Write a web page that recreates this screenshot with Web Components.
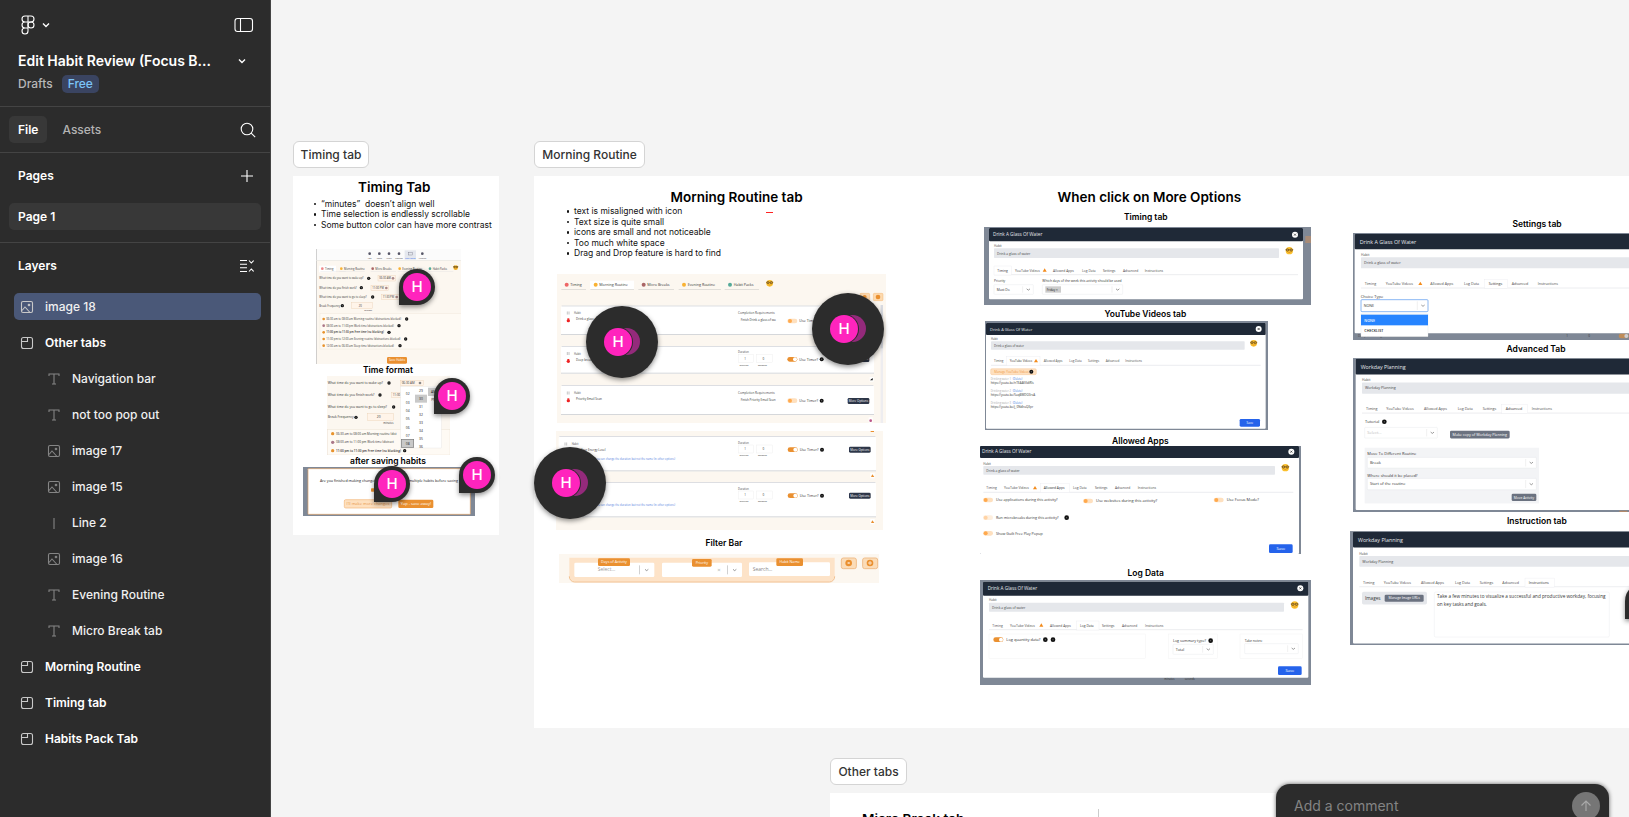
<!DOCTYPE html>
<html lang="en">
<head>
<meta charset="utf-8">
<title>Edit Habit Review</title>
<style>
  html, body { margin: 0; height: 100%; }
  body { font-family: Inter, "Liberation Sans", sans-serif; background: #f4f4f4; overflow: hidden; }
</style>
</head>
<body>
<design-app></design-app>

<script>
const define = (name, html, setup) => {
  const template = document.createElement('template');
  template.innerHTML = html;
  customElements.define(name, class extends HTMLElement {
    constructor() {
      super();
      this.attachShadow({ mode: 'open' }).append(template.content.cloneNode(true));
    }
    connectedCallback() { if (setup) setup(this, this.shadowRoot); }
  });
};

/* ---------- icons ---------- */
const ICONS = {
  figma: [14, 20, '<path d="M7 1H4a3 3 0 0 0 0 6h3zM7 1h3a3 3 0 0 1 0 6H7zM7 7H4a3 3 0 0 0 0 6h3zM7 13H4a3 3 0 1 0 3 3z"/><circle cx="10" cy="10" r="3"/>'],
  chevron: [8, 6, '<path d="M1 1.5l3 3 3-3" stroke-width="1.4"/>'],
  panel: [20, 16, '<rect x="1" y="1.5" width="17.5" height="13" rx="2.5"/><path d="M6.5 1.5v13"/>'],
  search: [16, 16, '<circle cx="7" cy="7" r="5.8"/><path d="M11.2 11.2l4 4"/>'],
  plus: [14, 14, '<path d="M7 1v12M1 7h12"/>'],
  collapse: [14, 14, '<path d="M0 1.5h7M0 5.2h7M0 8.8h7M0 12.5h7M9 1.5l2.3 2.5 2.3-2.5M9 12.5l2.3-2.5 2.3 2.5"/>'],
  image: [14, 14, '<rect x="1.5" y="1.5" width="11" height="11" rx="1.5"/><path d="M2 10.5l3-3.5 5 5.5"/><circle cx="9" cy="5" r=".8"/>'],
  frame: [14, 14, '<rect x="1.5" y="1.5" width="11" height="11" rx="2"/><path d="M7.5 1.5v4h-6"/>'],
  text: [14, 14, '<path d="M2 4V2h10v2M7 2v10M5 12h4"/>'],
  line: [14, 14, '<path d="M7 2v11"/>'],
  up: [14, 14, '<path d="M7 12V2M2.5 6.5L7 2l4.5 4.5"/>']
};
const drawIcon = name => {
  const [w, h, d] = ICONS[name];
  return `<svg width="${w}" height="${h}" viewBox="0 0 ${w} ${h}" aria-hidden="true">${d}</svg>`;
};
define('ui-icon', `<style>:host{display:inline-flex;flex:none} svg{display:block;fill:none;stroke:currentColor;stroke-width:1.1}</style><span></span>`,
  (el, root) => { root.querySelector('span').innerHTML = drawIcon(el.getAttribute('name')); });
const makeIcon = name => {
  const icon = document.createElement('ui-icon');
  icon.setAttribute('name', name);
  return icon;
};

/* ---------- left panel ---------- */
define('file-header', `<style>
  :host { display: block; padding: 15px 16px 13px 18px; border-bottom: 1px solid #444; }
  button { all: unset; display: flex; align-items: center; cursor: pointer; }
  .row { display: flex; align-items: center; justify-content: space-between; }
  .menu { gap: 7px; padding-left: 3px; }
  .name { margin-top: 16px; padding-right: 8px; }
  h1 { margin: 0; font-size: 14px; line-height: 20px; font-weight: 600; color: #fff; }
  .meta { display: flex; align-items: center; gap: 9px; margin-top: 4px; font-size: 12px; line-height: 18px; font-weight: 500; }
  a { color: #b8b8b8; text-decoration: none; }
  .plan { padding: 0 6px; border-radius: 5px; background: #3a4461; color: #7cc4f8; }
</style>
<div class="row"><button class="menu" aria-label="Main menu"><ui-icon name="figma"></ui-icon><ui-icon name="chevron"></ui-icon></button>
<button aria-label="Toggle panel"><ui-icon name="panel"></ui-icon></button></div>
<div class="row name"><h1>Edit Habit Review (Focus B...</h1><button aria-label="File options"><ui-icon name="chevron"></ui-icon></button></div>
<div class="meta"><a href="#drafts">Drafts</a><span class="plan">Free</span></div>`);

define('panel-tabs', `<style>
  :host { display: flex; align-items: center; padding: 9px 14px 9px 9px; border-bottom: 1px solid #444; }
  button { all: unset; padding: 0 9px; border-radius: 5px; font-size: 12px; line-height: 27px; font-weight: 500; color: #b3b3b3; cursor: pointer; }
  .on { background: #383838; color: #fff; font-weight: 600; margin-right: 6px; }
  .search { margin-left: auto; padding: 0; color: #fff; display: flex; }
</style>
<button class="on">File</button><button>Assets</button><button class="search" aria-label="Find"><ui-icon name="search"></ui-icon></button>`);

define('panel-heading', `<style>
  :host { display: flex; align-items: center; justify-content: space-between; padding: 0 16px 0 18px; color: #fff; }
  h2 { margin: 0; font-size: 12px; line-height: 45px; font-weight: 600; }
  button { all: unset; display: flex; cursor: pointer; }
</style><h2><slot></slot></h2><button></button>`,
  (el, root) => {
    const action = root.querySelector('button');
    action.setAttribute('aria-label', el.getAttribute('action'));
    action.append(makeIcon(el.getAttribute('icon')));
  });

define('layer-row', `<style>
  :host { display: block; color: #f0f0f0; }
  button { all: unset; box-sizing: border-box; display: flex; align-items: center; gap: 11px; width: 100%; padding-left: 6px;
    border-radius: 5px; font-size: 12px; line-height: 27px; font-weight: 500; cursor: pointer; }
  ui-icon { color: #c8c8c8; }
  :host([frame]) button { font-weight: 600; color: #fff; }
  :host([child]) button { padding-left: 33px; }
  :host([child]) ui-icon { color: #858585; }
  :host([selected]) button { background: #4a5878; }
</style><button><slot></slot></button>`,
  (el, root) => { root.querySelector('button').prepend(makeIcon(el.getAttribute('icon'))); });

define('layer-panel', `<style>
  :host { display: block; box-sizing: border-box; flex: none; width: 271px; background: #2c2c2c; color: #fff; border-right: 1px solid #444; }
  .pages { display: grid; border-bottom: 1px solid #444; padding-bottom: 12px; }
  .page { all: unset; margin: 5px 9px 0; padding: 0 9px; border-radius: 5px; background: #383838;
    font-size: 12px; line-height: 27px; font-weight: 600; cursor: pointer; }
  .layers { display: grid; gap: 9px; padding: 5px 9px 0 14px; }
</style>
<file-header></file-header>
<panel-tabs></panel-tabs>
<div class="pages"><panel-heading icon="plus" action="Add page">Pages</panel-heading><button class="page">Page 1</button></div>
<panel-heading icon="collapse" action="Collapse layers">Layers</panel-heading>
<div class="layers">
  <layer-row icon="image" selected>image 18</layer-row>
  <layer-row icon="frame" frame>Other tabs</layer-row>
  <layer-row icon="text" child>Navigation bar</layer-row>
  <layer-row icon="text" child>not too pop out</layer-row>
  <layer-row icon="image" child>image 17</layer-row>
  <layer-row icon="image" child>image 15</layer-row>
  <layer-row icon="line" child>Line 2</layer-row>
  <layer-row icon="image" child>image 16</layer-row>
  <layer-row icon="text" child>Evening Routine</layer-row>
  <layer-row icon="text" child>Micro Break tab</layer-row>
  <layer-row icon="frame" frame>Morning Routine</layer-row>
  <layer-row icon="frame" frame>Timing tab</layer-row>
  <layer-row icon="frame" frame>Habits Pack Tab</layer-row>
</div>`);

/* ---------- canvas objects: x, y, w, h attributes give their place on the board ---------- */
const place = el => {
  for (const [attr, prop] of [['x', 'left'], ['y', 'top'], ['w', 'width'], ['h', 'height']])
    if (el.hasAttribute(attr)) el.style[prop] = el.getAttribute(attr) + 'px';
};
define('board-section', `<style>:host{display:block;position:absolute;background:#fff}</style><slot></slot>`, place);
define('board-shape', `<style>:host{display:block;position:absolute;background:var(--fill)}</style>`, place);
define('board-note', `<style>
  :host { display: block; position: absolute; white-space: nowrap; color: #000; font-size: 17px; line-height: 20px; font-weight: 600; }
  :host([title]) { font-size: 27px; line-height: 32px; }
  :host([list]) { font-weight: 400; line-height: 21px; color: #111; }
</style><slot></slot>`, place);
define('section-label', `<style>
  :host { display: block; position: absolute; box-sizing: border-box; padding: 0 6px; border: 1px solid #d4d4d4; border-radius: 6px;
    background: #fff; color: #333; font-size: 12px; line-height: 25px; font-weight: 500; white-space: nowrap; text-align: center; }
</style><slot></slot>`, place);
define('comment-pin', `<style>
  :host { display: block; position: absolute; }
  button { all: unset; box-sizing: border-box; display: block; padding: 4px; width: 36px; height: 36px; border-radius: 18px 18px 18px 0;
    background: #2c2c2c; box-shadow: 0 2px 5px rgba(0,0,0,.45); cursor: pointer; }
  .avatar { display: grid; place-items: center; width: 28px; height: 28px; border-radius: 50%; background: #ff24bd; color: #fff;
    font-size: 15px; line-height: 28px; font-weight: 500; }
  .back { display: none; }
  :host([group]) button { position: relative; padding: 21px 18px; width: 72px; height: 72px; border-radius: 50%; }
  :host([group]) .avatar { position: relative; box-shadow: 0 0 0 1px #2c2c2c; }
  :host([group]) .back { display: block; position: absolute; left: 27px; top: 22px; width: 27px; height: 27px; border-radius: 50%; background: #942a7b; }
</style><button aria-label="Comment"><span class="back"></span><span class="avatar">H</span></button>`, place);
define('comment-box', `<style>
  :host { position: absolute; right: 20px; bottom: -16px; box-sizing: border-box; width: 333px; display: flex; align-items: center;
    padding: 8px 9px 13px 18px; border-radius: 14px; background: #2c2c2c; box-shadow: 0 0 4px rgba(0,0,0,.6); }
  input { all: unset; flex: 1; min-width: 0; font-size: 14px; line-height: 28px; color: #fff; }
  input::placeholder { color: #848484; opacity: 1; }
  button { all: unset; display: grid; place-items: center; width: 28px; height: 28px; border-radius: 50%; background: #767676; color: #aaa; cursor: pointer; }
</style><input aria-label="Comment" placeholder="Add a comment"><button aria-label="Send"><ui-icon name="up"></ui-icon></button>`);

/* ---------- drawing helpers for the pasted pictures (three units to a screen pixel) ---------- */
const NAVY = '#1f2937', SLATE = '#7f8896', CREAM = '#fcf7f0', ORANGE = '#ea9030', PEACH = '#fee0bf';
const box = (x1, y1, x2, y2, fill, more = '') => `<rect x="${x1}" y="${y1}" width="${x2 - x1}" height="${y2 - y1}" fill="${fill}" ${more}/>`;
const dot = (x, y, r, fill) => `<circle cx="${x}" cy="${y}" r="${r}" fill="${fill}"/>`;
const say = (x, y, size, text, fill = '#333', more = '') => `<text x="${x}" y="${y}" font-size="${size}" fill="${fill}" ${more}>${text}</text>`;
const mid = 'text-anchor="middle"';
const info = (x, y, r = 5) => dot(x, y, r, '#111') + `<path d="M${x} ${y - 2}v4" stroke="#fff"/>`;
const caret = (x, y) => `<path d="M${x - 5} ${y - 2}l5 4 5-4" fill="none" stroke="#666" stroke-width="2"/>`;
const choose = (x1, y1, x2, y2, text, size, fill) => box(x1, y1, x2, y2, '#fff', 'stroke="#dfe1e5" rx="2"') +
  say(x1 + 8, (y1 + y2) / 2 + 4, size, text, fill) + `<path d="M${x2 - 32} ${y1 + 5}V${y2 - 5}" stroke="#d0d0d0"/>` + caret(x2 - 15, (y1 + y2) / 2);
const toggle = (x, y, on, opacity = 1) => `<g opacity="${opacity}">` + box(x, y - 7, x + 30, y + 7, on ? ORANGE : PEACH, 'rx="7"') +
  dot(on ? x + 23 : x + 8, y, 6, on ? '#fff' : '#ffa94d') + '</g>';
const face = (x, y, r) => dot(x, y, r, '#fbc02d') + `<path d="M${x - r - 1} ${y - 3}h${2 * r + 2}" stroke="#6b4a14" stroke-width="1.5"/>` +
  [x - r / 2, x + r / 2].map(cx => `<circle cx="${cx}" cy="${y - 2}" r="${r / 3}" fill="#c99a3a" stroke="#6b4a14" stroke-width="2"/>`).join('') +
  `<path d="M${x - 3} ${y + r / 2}h6" stroke="#d9822b" stroke-width="2"/>`;
const warn = (x, y) => `<path d="M${x} ${y - 10}l6 10h-12z" fill="#f38b1c"/>`;
const button = (x1, y1, x2, y2, text, size, fill = '#2563eb', ink = '#fff', more = '') =>
  box(x1, y1, x2, y2, fill, 'rx="4" ' + more) + say((x1 + x2) / 2, (y1 + y2) / 2 + size / 3, size, text, ink, mid);
const TABS = ['Timing', 'YouTube Videos', 'Allowed Apps', 'Log Data', 'Settings', 'Advanced', 'Instructions'];
const tabs = (y, size, xs, sel, [s1, s2], [l1, l2], warnX) =>
  `<path d="M${l1} ${y + 9}H${l2}" stroke="#e2e4e8" stroke-width="2"/>` + box(s1, y - 17, s2, y + 10, '#fff', 'stroke="#e6e8ec"') +
  xs.map((x, i) => say(x, y, size, TABS[i], i === sel ? '#333' : '#4b4b4b')).join('') + (warnX ? warn(warnX, y) : '');
const closeDot = (x, y) => dot(x, y, 9, '#fff') + `<path d="M${x - 3} ${y - 3}l6 6m0-6l-6 6" stroke="#222" stroke-width="2"/>`;

/* a picture cut out of the view whose corner is (ox, oy) on screen; PANEL is the width of the left panel */
const PANEL = 271;
const picture = (ox, oy, x, y, w, h, name, body) => {
  const r = n => Math.round(n);
  return `<svg role="img" aria-label="${name}" viewBox="${x} ${y} ${w} ${h}" style="left:${r(2 * (ox - PANEL) + x * 2 / 3)}px;top:${r(2 * oy + y * 2 / 3)}px;width:${r(w * 2 / 3)}px;height:${r(h * 2 / 3)}px">${body}</svg>`;
};
const dialog = (outer, inner, headBottom, titleXY, title, titleSize, close) =>
  box(...outer, SLATE) + box(...inner, '#fff', 'rx="3"') + box(inner[0], inner[1], inner[2], headBottom, NAVY, 'rx="3"') +
  say(...titleXY, titleSize, title, '#e5e7eb') + (close ? closeDot(...close) : '');
const field = (x1, y1, x2, y2, text, size) => say(x1, y1 - 4, size - 1, 'Habit', '#444') + box(x1, y1, x2, y2, '#e5e7eb', 'rx="2"') +
  say(x1 + 9, (y1 + y2) / 2 + 4, size, text, '#444');

const WATER = 'Drink A Glass Of Water', WORK = 'Workday Planning', water = 'Drink a glass of water';
const plan = ['06:30 am to 08:00 am Morning routine (distractions blocked)', '08:00 am to 11:00 pm Work time (distractions blocked)',
  '11:00 pm to 11:30 pm Free time (no blocking)', '11:30 pm to 12:00 am Evening routine (distractions blocked)', '12:00 am to 06:30 am Sleep time (distractions blocked)'];

const timing = picture(280, 130, 108, 357, 435, 345, 'Timing settings', box(108, 357, 543, 702, CREAM) + box(108, 357, 543, 391, '#fbfbfb') +
  box(108, 357, 110, 702, '#bbb') + box(108, 390, 543, 392, '#e8e6e2') + box(374, 361, 408, 389, '#e4e7ee') +
  [269, 298, 327, 357, 427].map(x => dot(x, 371, 4, '#556')).join('') + box(385, 367, 397, 375, 'none', 'stroke="#667"') +
  [[269, 'Info'], [298, 'Focus'], [327, 'Music'], [357, 'Settings'], [391, 'Edit Habits'], [427, 'Account']].map(([x, s]) => say(x, 386, 6, s, x === 391 ? '#2563eb' : '#444', mid)).join('') +
  box(117, 407, 168, 427, '#fff') +
  [[127, '#e88', 'Timing'], [184, '#f9b233', 'Morning Routine'], [278, '#a66', 'Micro Breaks'], [359, '#f9b233', 'Evening Routine'], [450, '#5a9', 'Habit Packs']].map(([x, c, s]) => dot(x, 416, 4, c) + say(x + 8, 419, 8, s) + box(x - 6, 424, x + 70, 425, '#ddd')).join('') + face(527, 413, 7) +
  say(118, 448, 8, 'What time do you want to wake up?') + info(266, 445) + box(294, 437, 346, 453, '#fff4e9', 'stroke="#e8c9a8"') + say(298, 448, 8, '06:30 AM') + dot(339, 445, 4, '#a88') +
  say(118, 476, 8, 'What time do you finish work?') + info(244, 473) + box(273, 466, 326, 481, '#fff4e9', 'stroke="#e8c9a8"') + say(277, 476, 8, '11:00 PM') + dot(319, 474, 4, '#a88') +
  say(118, 504, 8, 'What time do you want to go to sleep?') + info(278, 501) + box(304, 494, 358, 509, '#fff4e9', 'stroke="#e8c9a8"') + say(308, 504, 8, '11:30 PM') + dot(350, 501, 4, '#a88') +
  say(118, 530, 8, 'Break Frequency') + info(187, 527) + box(214, 518, 277, 536, '#fff4e9', 'stroke="#e8c9a8"') + say(241, 530, 8, '20', '#333', mid) + say(253, 543, 6, 'minutes') +
  box(120, 551, 560, 657, '#fefaf4', 'stroke="#eee3d4"') +
  [567, 587, 607, 627, 647].map((y, i) => dot(131, y, 4, i === 1 ? '#a78' : '#e8932e') + say(139, y + 3, 8, plan[i], '#333', i === 2 ? 'font-weight="600"' : '') + info([380, 357, 327, 377, 360][i], y)).join('') +
  button(321, 681, 381, 701, 'Save Habits', 9, ORANGE));

const format = picture(280, 340, 141, 108, 369, 237, 'Time format picker', box(141, 108, 510, 345, CREAM) +
  say(143, 132, 10, 'What time do you want to wake up?') + info(327, 129) + box(361, 121, 430, 137, '#fff4e9', 'stroke="#e8c9a8"') + say(365, 132, 9, '06:30 AM') + dot(420, 129, 4, '#888') +
  say(143, 167, 10, 'What time do you finish work?') + info(300, 165) + box(334, 157, 400, 173, '#fff4e9', 'stroke="#e8c9a8"') + say(338, 168, 9, '11:00') +
  say(143, 203, 10, 'What time do you want to go to sleep?') + info(341, 201) +
  say(143, 235, 10, 'Break Frequency') + info(228, 232) + box(262, 221, 341, 242, '#fff4e9', 'stroke="#e8c9a8"') + say(296, 235, 10, '20', '#333', mid) + say(310, 251, 8, 'minutes') +
  box(143, 268, 510, 345, '#fefaf4', 'stroke="#e5d9c8"') +
  [281, 307, 332].map((y, i) => dot(158, y, 5, i === 1 ? '#a78' : '#e8932e') + say(168, y + 3, 9, plan[i].slice(0, [42, 40, 44][i]), '#333', i === 2 ? 'font-weight="600"' : '')).join('') + info(374, 332) +
  box(362, 140, 484, 324, '#fff', 'stroke="#e0e0e0"') + box(405, 164, 441, 188, '#c9c9c9') + box(444, 143, 480, 168, '#c9c9c9') + box(364, 298, 401, 322, '#c9c9c9', 'stroke="#777" stroke-width="2"') +
  ['02', '03', '04', '05', '06', '07', '08'].map((s, i) => say(383, 166 + i * 25, 10, s, '#222', mid)).join('') +
  ['29', '30', '31', '32', '33', '34', '35', '36'].map((s, i) => say(423, 155 + i * 24, 10, s, '#222', mid)).join('') +
  say(461, 160, 10, 'AM', '#222', mid) + say(461, 184, 10, 'PM', '#222', mid));

const saving = picture(280, 340, 69, 381, 516, 147, 'Save confirmation', box(69, 381, 585, 528, SLATE) +
  box(84, 386, 571, 523, '#fff', 'stroke="#e2a366" stroke-width="2" rx="2"') +
  say(120, 426, 11, 'Are you finished making changes?', '#111') + say(534, 426, 11, 'multiple habits before saving', '#111', 'text-anchor="end"') + box(273, 445, 283, 455, ORANGE, 'rx="2"') +
  button(193, 479, 335, 504, "I'll make more changes", 12, PEACH, '#e8974a', 'stroke="#f2b678" stroke-width="2"') + button(355, 479, 460, 504, 'Yup - save away!', 12, ORANGE));

const card = (x1, y1, x2, y2) => box(x1, y1, x2, y2, '#fff', 'rx="5"') + box(x1 + 2, y1, x2 - 2, y1 + 2, '#cdd0d6') + box(x1, y2 - 3, x2, y2, '#d5d7da');
const habit = (x, y, text) => `<path d="M${x + 2} ${y - 7}v9m5-9v9" stroke="#777" stroke-dasharray="2 1" stroke-width="2"/>` + say(x + 22, y, 8, 'Habit', '#444') +
  dot(x + 5, y + 20, 5, '#e22') + box(x + 2, y + 13, x + 8, y + 16, '#e22') + say(x + 28, y + 18, 9, text);
const needs = (y, text) => say(624, y, 9, 'Completion Requirements', '#444') + say(632, y + 20, 9, text);
const duration = (y) => say(624, y - 19, 8, 'Duration', '#444') + box(625, y - 16, 671, y + 8, '#fff', 'stroke="#e8e8e8"') + box(680, y - 16, 727, y + 8, '#fff', 'stroke="#e8e8e8"') +
  say(645, y, 9, '1', '#333', mid) + say(700, y, 9, '0', '#333', mid) + say(642, y + 18, 7, 'minutes', '#333', mid) + say(697, y + 18, 7, 'seconds', '#333', mid);
const timer = (x, y, on) => toggle(x, y, on) + say(x + 36, y + 4, 11, 'Use Timer?') + info(x + 103, y, 6);

const morning = picture(530, 130, 81, 432, 987, 447, 'Morning routine list', box(81, 432, 1068, 879, CREAM) + box(180, 452, 312, 479, '#fff') +
  [[110, '#e66', 'Timing', 168], [197, '#f9b233', 'Morning Routine', 312], [341, '#a66', 'Micro Breaks', 432], [462, '#f9b233', 'Evening Routine', 573], [600, '#5a9', 'Habit Packs', 687]].map(([x, c, s, e]) => dot(x, 464, 6, c) + say(x + 11, 468, 11, s) + box(x - 16, 477, e, 479, '#d4d2ce')).join('') +
  face(719, 460, 10) + box(990, 490, 1019, 512, '#fdd9ae', 'rx="3" stroke="#f0a550"') + box(1030, 490, 1059, 512, '#fdd9ae', 'rx="3" stroke="#f0a550"') + dot(1004, 501, 6, ORANGE) + dot(1044, 501, 7, ORANGE) +
  box(1052, 525, 1059, 879, '#eeedf0') + box(1052, 525, 1059, 655, '#d8dae0') +
  card(93, 527, 1032, 615) + habit(110, 552, water) + needs(552, 'Finish Drink a glass of wa') + timer(772, 573, false) +
  card(93, 648, 1032, 731) + habit(110, 674, 'Deep breathing') + duration(689) + timer(772, 688, true) + button(953, 678, 1018, 696, 'More Options', 9, '#2d3648') +
  box(1019, 741, 1031, 755, '#fff') + `<path d="M1020 751l8-7v7z" fill="#111"/>` +
  card(93, 766, 1032, 855) + habit(110, 792, 'Priority Email Scan') + needs(792, 'Finish Priority Email Scan') + timer(772, 812, false) + button(953, 804, 1018, 822, 'More Options', 9, '#2d3648') +
  box(1016, 862, 1028, 878, '#fff') + dot(1022, 872, 4, '#b58'));

const note = 'This is a default habit - you can change the duration but not the name (in other options)';
const energy = picture(530, 410, 78, 63, 981, 297, 'Energy habits list', box(78, 63, 1059, 360, CREAM) + box(1022, 63, 1032, 66, ORANGE) +
  [79, 217].map((y, i) => card(86, y, 1038, y + 105) + habit(103, y + 26, i ? 'Rate Your Mood' : 'Rate Your Energy Level') + say(435, y + 72, 8, note, '#4f7de0', 'text-anchor="end"') +
    duration(y + 42) + timer(773, y + 40, true) + button(957, y + 31, 1022, y + 49, 'More Options', 9, '#2d3648') +
    box(1021, y + 110, 1034, y + 126, '#fff') + `<path d="M1023 ${y + 122}l4-8 6 8z" fill="${ORANGE}"/>`).join(''));

const filterTag = (x1, x2, y, text) => button(x1, y, x2, y + 23, text, 11, ORANGE);
const filters = picture(530, 410, 87, 431, 960, 87, 'Filter bar', box(87, 431, 1047, 518, CREAM) +
  `<path d="M118 442H914V498a16 16 0 0 1-16 16H134a16 16 0 0 1-16-16z" fill="#fde3c8"/><path d="M118 498a16 16 0 0 0 16 17H898a16 16 0 0 0 16-17" fill="none" stroke="#f2c191" stroke-width="3"/>` +
  box(133, 457, 373, 500, '#fff', 'rx="4"') + box(396, 457, 636, 500, '#fff', 'rx="4"') + box(657, 456, 900, 497, '#fff', 'rx="4"') +
  say(203, 483, 15, 'Select...', '#999') + say(668, 483, 15, 'Search...', '#888') + say(562, 484, 18, '×', '#aaa') +
  box(327, 465, 329, 492, '#bbb') + box(591, 465, 593, 492, '#bbb') + caret(350, 479) + caret(614, 479) +
  filterTag(204, 300, 444, 'Days of Activity') + filterTag(486, 545, 446, 'Priority') + filterTag(739, 819, 444, 'Habit Name') +
  [934, 998].map(x => box(x, 443, x + 45, 475, '#fbdcb8', 'rx="6" stroke="#f0bd8a" stroke-width="3"') + dot(x + 22, 458, 10, ORANGE)).join('') +
  `<path d="M953 455l6 6m0-6l-6 6M1020 452v12M1014 458h12" stroke="#fff" stroke-width="2"/>`);

const dTiming = picture(970, 180, 42, 141, 981, 234, 'Options, timing', dialog([42, 141, 1023, 375], [57, 144, 999, 358], 184, [69, 169], WATER, 14, [975, 164]) +
  box(1006, 168, 1030, 189, '#a98c78') + field(72, 205, 927, 234, water, 10) + face(958, 212, 11) +
  tabs(275, 10, [82, 135, 249, 336, 399, 459, 524], 0, [72, 124], [72, 984], 224) +
  say(72, 307, 10, 'Priority') + choose(72, 314, 190, 343, 'Must Do', 10) + say(217, 307, 10, 'Which days of the week this activity should be used') +
  choose(217, 314, 458, 343, '', 10) + box(226, 319, 273, 338, '#ccc') + say(230, 332, 9, 'Friday ×', '#111'));

const dVideos = picture(970, 180, 43, 423, 849, 327, 'Options, YouTube videos', dialog([43, 423, 892, 750], [46, 429, 885, 746], 465, [58, 452], WATER, 12, [864, 447]) +
  field(61, 484, 822, 509, water, 9) + face(849, 490, 10) + tabs(547, 9, [70, 117, 219, 296, 352, 405, 464], 1, [108, 208], [61, 870], 196) +
  box(60, 566, 197, 584, PEACH, 'rx="4" stroke="#f2b678"') + say(71, 578, 9, 'Manage YouTube Videos', '#ef9a45') + info(182, 575, 6) +
  ['nTEAAKKdiRls', '5aqBWDO3rsA', 'j_0NdlruQEpr'].map((id, i) => say(60, 600 + i * 36, 8, 'Drinking water ' + (i + 1), '#aaa') + say(126, 600 + i * 36, 8, '(Delete)', '#3b6fe0') + say(60, 613 + i * 36, 9, 'https://youtu.be/' + id)).join('') +
  button(807, 717, 868, 740, 'Save', 9));

const dApps = picture(970, 430, 30, 48, 963, 324, 'Options, allowed apps', dialog([30, 48, 993, 372], [30, 48, 987, 372], 84, [36, 70], WATER, 14, [964, 65]) +
  field(40, 108, 915, 134, water, 10) + face(946, 113, 11) + tabs(178, 10, [49, 102, 221, 309, 375, 435, 503], 2, [211, 298], [40, 970], 195) +
  toggle(39, 210) + say(78, 214, 11, 'Use applications during this activity?') + toggle(339, 213) + say(378, 217, 12, 'Use websites during this activity?') +
  toggle(731, 210) + say(770, 214, 12, 'Use Focus Mode?') + toggle(39, 263, false, .5) + say(78, 267, 11, 'Run microbreaks during this activity?') + info(290, 263, 7) +
  toggle(39, 310) + say(78, 314, 11, 'Show Guilt Free Play Popup') + button(897, 343, 968, 369, 'Save', 12));

const dLog = picture(970, 430, 30, 450, 993, 315, 'Options, log data', dialog([30, 450, 1023, 765], [39, 455, 1015, 743], 497, [53, 481], WATER, 14, [991, 475]) +
  say(583, 751, 8, 'minutes') + say(644, 751, 8, 'seconds') + field(57, 518, 942, 545, water, 10) + face(974, 525, 11) +
  tabs(590, 10, [67, 120, 240, 330, 396, 456, 525], 3, [320, 387], [57, 998], 214) + box(57, 612, 526, 685, 'none', 'stroke="#eee"') + box(595, 612, 742, 685, 'none', 'stroke="#eee"') + box(810, 612, 998, 685, 'none', 'stroke="#eee"') +
  toggle(70, 629, true) + say(109, 634, 12, 'Log quantity data?') + info(226, 629, 7) + info(249, 629, 7) +
  say(609, 636, 11, 'Log summary type?') + info(722, 632, 7) + choose(609, 643, 730, 673, 'Total', 11) + say(824, 635, 10, 'Take notes:') + choose(824, 641, 985, 671, '', 10) +
  button(924, 709, 995, 735, 'Save', 12));

const dSettings = picture(1340, 180, 37, 159, 900, 321, 'Options, settings', dialog([37, 159, 940, 480], [42, 162, 940, 460], 208, [57, 191], WATER, 16) +
  say(52, 472, 10, 'Deep breathing', '#444') + say(677, 471, 9, '1') + say(743, 471, 9, '0') + `<g opacity=".6">${toggle(834, 468, true)}</g>` +
  field(61, 232, 940, 265, water, 11) + tabs(315, 11, [72, 135, 269, 370, 444, 513, 591], 4, [432, 501], [61, 940], 239) +
  say(60, 353, 12, 'Choice Type') + choose(61, 359, 262, 395, 'NONE', 11) + box(61, 359, 262, 395, 'none', 'stroke="#5b9df5" stroke-width="2" rx="3"') +
  box(61, 402, 262, 470, '#fff', 'stroke="#ddd"') + box(61, 404, 262, 436, '#2684ff') + say(71, 425, 11, 'NONE', '#fff', 'font-weight="600"') + say(71, 455, 11, 'CHECKLIST', '#222', 'font-weight="600"'));

const dAdvanced = picture(1340, 180, 37, 532, 900, 463, 'Options, advanced', dialog([37, 532, 940, 995], [45, 534, 940, 988], 581, [60, 564], WORK, 16) +
  field(64, 605, 940, 639, WORK, 11) + tabs(688, 11, [76, 137, 250, 351, 426, 495, 573], 5, [483, 561], [64, 940]) +
  say(73, 727, 12, 'Tutorial') + info(131, 723, 7) + choose(72, 740, 290, 772, 'Select...', 12, '#bbb') + button(328, 750, 507, 773, 'Make copy of Workday Planning', 11, '#6b7280') +
  box(72, 801, 595, 968, '#f3f4f6') + say(80, 824, 12, 'Move To Different Routine') + choose(80, 830, 587, 862, 'Break', 12) +
  say(80, 888, 12, 'Where should it be placed?') + choose(80, 893, 587, 927, 'Start of the routine', 12) + button(513, 939, 587, 961, 'Move Activity', 10, '#6b7280') +
  box(836, 990, 860, 995, '#b3896a'));

const dInstructions = picture(1340, 420, 30, 331, 900, 343, 'Options, instructions', dialog([30, 331, 940, 674], [39, 333, 940, 668], 380, [54, 364], WORK, 16) +
  field(58, 406, 940, 438, WORK, 11) + tabs(489, 11, [69, 131, 243, 345, 419, 487, 566], 6, [555, 643], [58, 940]) +
  box(66, 513, 261, 551, '#e5e7eb', 'rx="5"') + say(75, 537, 14, 'Images') + button(134, 522, 251, 543, 'Manage Image URLs', 10, '#6b7280') +
  box(283, 514, 808, 649, '#fff', 'stroke="#e2e4e8" rx="4"') + say(291, 533, 14, 'Take a few minutes to visualize a successful and productive workday, focusing') + say(291, 556, 14, 'on key tasks and goals.'));

define('design-canvas', `<style>
  :host { display: block; position: relative; flex: 1; min-width: 0; overflow: hidden; background: #f4f4f4; }
  .board { position: absolute; inset: 0; zoom: 50%; }
  .board svg { position: absolute; display: block; font-family: "Open Sans", sans-serif; }
  ul { margin: 0; padding: 0; list-style: none; }
  li { display: flex; align-items: center; gap: 10px; }
  li::before { content: ""; width: 5px; height: 5px; border-radius: 50%; background: #111; }
</style>
<div class="board">
  <board-section x="44" y="352" w="412" h="717"></board-section>
  <board-section x="526" y="352" w="2400" h="1103"></board-section>
  <board-section x="1118" y="1586" w="1200" h="400"></board-section>
  <board-note title x="174" y="358">Timing Tab</board-note>
  <board-note list x="85" y="397"><ul><li>“minutes”&nbsp; doesn’t align well</li><li>Time selection is endlessly scrollable</li><li>Some button color can have more contrast</li></ul></board-note>
  <board-note x="184" y="730">Time format</board-note>
  <board-note x="158" y="912">after saving habits</board-note>
  <board-note title x="799" y="378">Morning Routine tab</board-note>
  <board-note list x="591" y="412"><ul><li>text is misaligned with icon</li><li>Text size is quite small</li><li>icons are small and not noticeable</li><li>Too much white space</li><li>Drag and Drop feature is hard to find</li></ul></board-note>
  <board-shape x="990" y="423" w="14" h="2" style="--fill:#f22"></board-shape>
  <board-note x="869" y="1076">Filter Bar</board-note>
  <board-note title x="1573" y="378">When click on More Options</board-note>
  <board-note x="1706" y="423">Timing tab</board-note>
  <board-note x="1667" y="617">YouTube Videos tab</board-note>
  <board-note x="1682" y="871">Allowed Apps</board-note>
  <board-note x="1713" y="1136">Log Data</board-note>
  <board-note x="2483" y="438">Settings tab</board-note>
  <board-note x="2471" y="687">Advanced Tab</board-note>
  <board-note x="2472" y="1032">Instruction tab</board-note>
  <board-note title x="1182" y="1622">Micro Break tab</board-note>
  <board-shape x="1654" y="1618" w="2" h="300" style="--fill:#ccc"></board-shape>
  ${timing}${format}${saving}${morning}${energy}${filters}${dTiming}${dVideos}${dApps}${dLog}${dSettings}${dAdvanced}${dInstructions}
</div>
<section-label x="22" y="141" w="76">Timing tab</section-label>
<section-label x="263" y="141" w="111">Morning Routine</section-label>
<section-label x="559" y="758" w="77">Other tabs</section-label>
<comment-pin x="128" y="269"></comment-pin>
<comment-pin x="163" y="378"></comment-pin>
<comment-pin x="103" y="466"></comment-pin>
<comment-pin x="188" y="457"></comment-pin>
<comment-pin group x="315" y="306"></comment-pin>
<comment-pin group x="541" y="293"></comment-pin>
<comment-pin group x="263" y="447"></comment-pin>
<comment-pin x="1354" y="583"></comment-pin>
<comment-box></comment-box>`);

define('design-app', `<style>:host{display:flex;height:100vh;overflow:hidden}</style><layer-panel></layer-panel><design-canvas></design-canvas>`);
</script>
</body>
</html>
